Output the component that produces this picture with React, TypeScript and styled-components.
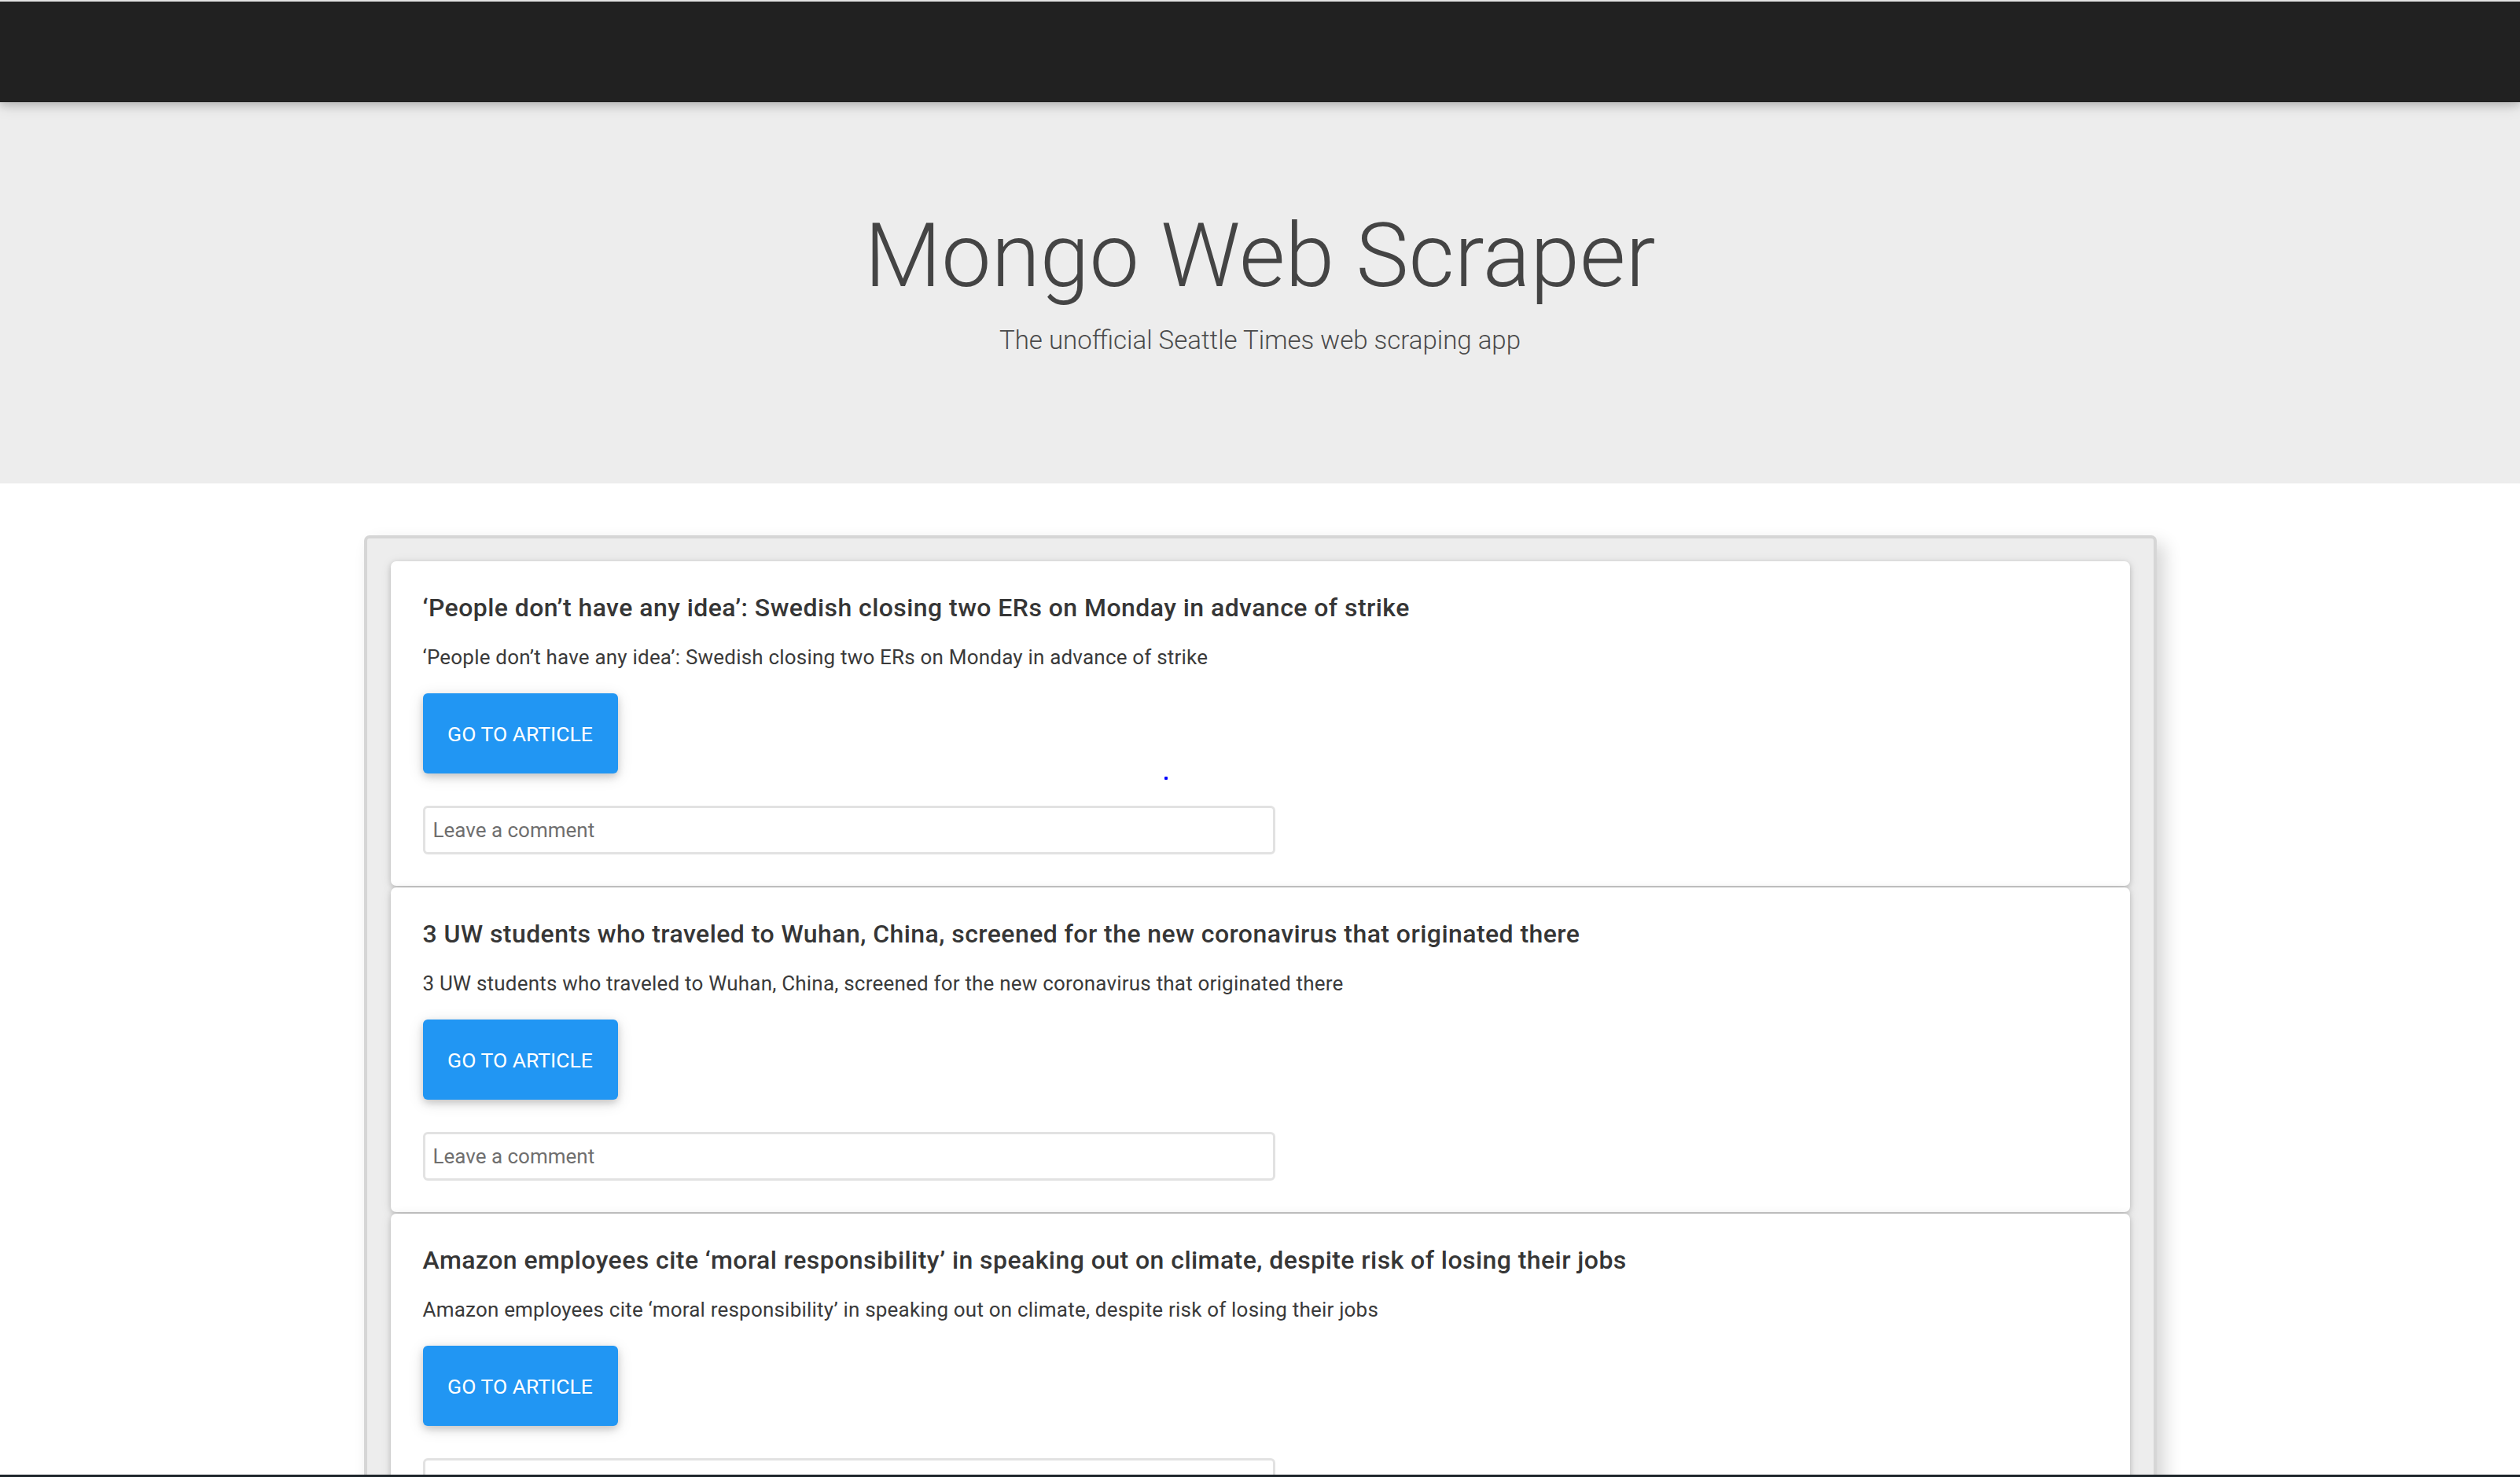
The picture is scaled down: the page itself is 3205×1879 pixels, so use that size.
import React from "react";
import styled, { createGlobalStyle } from "styled-components";

const GlobalStyle = createGlobalStyle`
  html, body {
    margin: 0;
    padding: 0;
    background: #ffffff;
    overflow: hidden;
  }
  body {
    font-family: Roboto, "Liberation Sans", Arial, sans-serif;
    color: #333333;
  }
  * {
    box-sizing: border-box;
  }
`;

const Page = styled.div`
  height: 100vh;
  overflow: hidden;
  display: flex;
  flex-direction: column;
`;

const NavBar = styled.nav`
  flex: 0 0 auto;
  height: 130px;
  background: #212121;
  border-top: 2px solid #e4e4e4;
  box-shadow: 0 4px 10px rgba(0, 0, 0, 0.16), 0 4px 20px rgba(0, 0, 0, 0.12);
  position: relative;
  z-index: 2;
`;

const Jumbotron = styled.header`
  flex: 0 0 auto;
  height: 485px;
  background: #ededed;
  padding-top: 127px;
  text-align: center;
`;

const Title = styled.h1`
  margin: 0 0 14px;
  font-family: Roboto, "Liberation Sans", sans-serif;
  font-weight: 300;
  font-size: 113px;
  line-height: 137px;
  color: #444444;
  letter-spacing: 0;
`;

const Lead = styled.p`
  margin: 0;
  font-family: Roboto, "Liberation Sans", sans-serif;
  font-weight: 300;
  font-size: 33px;
  line-height: 49px;
  color: #4a4a4a;
`;

const Well = styled.section`
  width: 2280px;
  margin: 66px auto 0;
  padding: 29px 30px;
  background: #ededed;
  border: 4px solid #d6d6d6;
  border-radius: 7px;
  box-shadow: 10px 10px 22px rgba(0, 0, 0, 0.16);
  display: flex;
  flex-direction: column;
  gap: 2px;
`;

const Card = styled.article`
  position: relative;
  flex: 0 0 auto;
  height: 413px;
  background: #ffffff;
  border-radius: 7px;
  padding: 41px 41px 39px;
  box-shadow: 0 2px 6px rgba(0, 0, 0, 0.16), 0 2px 14px rgba(0, 0, 0, 0.1);
  display: flex;
  flex-direction: column;
  align-items: flex-start;
`;

const Headline = styled.h2`
  margin: 0 0 26px;
  font-family: Roboto, "Liberation Sans", sans-serif;
  font-weight: 500;
  font-size: 32px;
  line-height: 37px;
  letter-spacing: 0.44px;
  color: #363636;
`;

const Summary = styled.p`
  margin: 0 0 28px;
  font-family: Roboto, "Liberation Sans", sans-serif;
  font-weight: 400;
  font-size: 26px;
  line-height: 36px;
  letter-spacing: 0.2px;
  color: #3a3a3a;
`;

const ArticleButton = styled.a`
  display: inline-flex;
  align-items: center;
  justify-content: center;
  height: 102px;
  width: 248px;
  margin-bottom: 41px;
  background: #2196f3;
  color: #ffffff;
  border-radius: 6px;
  font-family: Roboto, "Liberation Sans", sans-serif;
  font-weight: 400;
  font-size: 26.5px;
  text-transform: uppercase;
  text-decoration: none;
  box-shadow: 0 4px 10px rgba(0, 0, 0, 0.16), 0 4px 20px rgba(0, 0, 0, 0.12);
  cursor: pointer;
`;

const CommentInput = styled.input`
  width: 1084px;
  height: 62px;
  padding: 0 10px;
  border: 3px solid #e2e2e2;
  border-radius: 6px;
  background: #ffffff;
  font-family: Roboto, "Liberation Sans", sans-serif;
  font-size: 26px;
  color: #333333;
  outline: none;

  &::placeholder {
    color: #6f6f6f;
  }
`;

const PointerDot = styled.span`
  position: absolute;
  left: 984px;
  top: 274px;
  width: 4px;
  height: 4px;
  background: #0000ff;
  border-radius: 1px;
`;

const TaskStrip = styled.div`
  position: fixed;
  left: 0;
  right: 0;
  bottom: 0;
  height: 3px;
  background: #1e262b;
`;

type Article = {
  title: string;
  summary: string;
  link: string;
};

const articles: Article[] = [
  {
    title:
      "\u2018People don\u2019t have any idea\u2019: Swedish closing two ERs on Monday in advance of strike",
    summary:
      "\u2018People don\u2019t have any idea\u2019: Swedish closing two ERs on Monday in advance of strike",
    link: "#",
  },
  {
    title:
      "3 UW students who traveled to Wuhan, China, screened for the new coronavirus that originated there",
    summary:
      "3 UW students who traveled to Wuhan, China, screened for the new coronavirus that originated there",
    link: "#",
  },
  {
    title:
      "Amazon employees cite \u2018moral responsibility\u2019 in speaking out on climate, despite risk of losing their jobs",
    summary:
      "Amazon employees cite \u2018moral responsibility\u2019 in speaking out on climate, despite risk of losing their jobs",
    link: "#",
  },
];

export default function App() {
  return (
    <Page>
      <GlobalStyle />
      <NavBar />
      <Jumbotron>
        <Title>Mongo Web Scraper</Title>
        <Lead>The unofficial Seattle Times web scraping app</Lead>
      </Jumbotron>
      <Well>
        {articles.map((a, i) => (
          <Card key={i}>
            <Headline>{a.title}</Headline>
            <Summary>{a.summary}</Summary>
            <ArticleButton href={a.link}>Go to article</ArticleButton>
            <CommentInput type="text" placeholder="Leave a comment" />
            {i === 0 && <PointerDot />}
          </Card>
        ))}
      </Well>
      <TaskStrip />
    </Page>
  );
}
